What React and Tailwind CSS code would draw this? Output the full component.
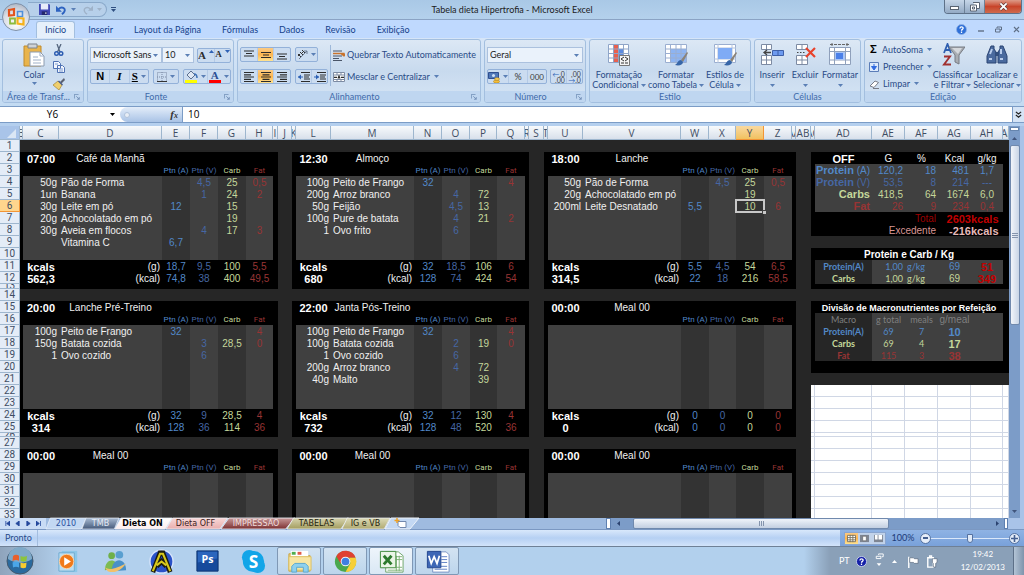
import clsx from "clsx";

const COLUMNS = [
  ["B", 3], ["C", 36], ["D", 103], ["E", 28], ["F", 28], ["G", 28], ["H", 27],
  ["I", 5], ["J", 14], ["K", 4], ["L", 35], ["M", 83], ["N", 28], ["O", 28],
  ["P", 27], ["Q", 28], ["R", 4], ["S", 15], ["T", 4], ["U", 35], ["V", 98],
  ["W", 28], ["X", 27], ["Y", 28], ["Z", 28], ["AA", 4], ["AB", 15], ["AC", 4],
  ["AD", 57], ["AE", 33], ["AF", 33], ["AG", 33], ["AH", 32], ["AI", 6],
];
const NAMES = COLUMNS.map((c) => c[0]);
const ROWS = Array.from({ length: 33 }, (_, i) => i + 1);

const WHITE = "text-[#f0f0f0]";
const BOLD = "font-bold text-[11px]";
const PTN_A = "text-[#5288c8]";
const PTN_V = "text-[#4667a4]";
const CARB = "text-[#c4d79b]";
const FAT = "text-[#983434]";
const MACROS = [PTN_A, PTN_V, CARB, FAT];

const MEALS = [
  {
    col: "C", row: 2, time: "07:00", name: "Café da Manhã",
    items: [
      ["50g", "Pão de Forma", "", "4,5", "25", "0,5"],
      ["1un", "Banana", "", "1", "24", "2"],
      ["30g", "Leite em pó", "12", "", "15", ""],
      ["20g", "Achocolatado em pó", "", "", "19", ""],
      ["30g", "Aveia em flocos", "", "4", "17", "3"],
      ["", "Vitamina C", "6,7", "", "", ""],
    ],
    total: "562,3", g: ["18,7", "9,5", "100", "5,5"], kcal: ["74,8", "38", "400", "49,5"],
  },
  {
    col: "L", row: 2, time: "12:30", name: "Almoço",
    items: [
      ["100g", "Peito de Frango", "32", "", "", "4"],
      ["200g", "Arroz branco", "", "4", "72", ""],
      ["50g", "Feijão", "", "4,5", "13", ""],
      ["100g", "Pure de batata", "", "4", "21", "2"],
      ["1", "Ovo frito", "", "6", "", ""],
    ],
    total: "680", g: ["32", "18,5", "106", "6"], kcal: ["128", "74", "424", "54"],
  },
  {
    col: "U", row: 2, time: "18:00", name: "Lanche",
    items: [
      ["50g", "Pão de Forma", "", "4,5", "25", "0,5"],
      ["20g", "Achocolatado em pó", "", "", "19", ""],
      ["200ml", "Leite Desnatado", "5,5", "", "10", "6"],
    ],
    total: "314,5", g: ["5,5", "4,5", "54", "6,5"], kcal: ["22", "18", "216", "58,5"],
  },
  {
    col: "C", row: 15, time: "20:00", name: "Lanche Pré-Treino",
    items: [
      ["100g", "Peito de Frango", "32", "", "", "4"],
      ["150g", "Batata cozida", "", "3", "28,5", "0"],
      ["1", "Ovo cozido", "", "6", "", ""],
    ],
    total: "314", g: ["32", "9", "28,5", "4"], kcal: ["128", "36", "114", "36"],
  },
  {
    col: "L", row: 15, time: "22:00", name: "Janta Pós-Treino",
    items: [
      ["100g", "Peito de Frango", "32", "", "", "4"],
      ["100g", "Batata cozida", "", "2", "19", "0"],
      ["1", "Ovo cozido", "", "6", "", ""],
      ["200g", "Arroz branco", "", "4", "72", ""],
      ["40g", "Malto", "", "", "39", ""],
    ],
    total: "732", g: ["32", "12", "130", "4"], kcal: ["128", "48", "520", "36"],
  },
  {
    col: "U", row: 15, time: "00:00", name: "Meal 00", items: [],
    total: "0", g: ["0", "0", "0", "0"], kcal: ["0", "0", "0", "0"],
  },
  { col: "C", row: 28, time: "00:00", name: "Meal 00", items: [] },
  { col: "L", row: 28, time: "00:00", name: "Meal 00", items: [] },
  { col: "U", row: 28, time: "00:00", name: "Meal 00", items: [] },
];

const cells = {};
const put = (col, row, text, cls, span = 1) => {
  if (text) cells[col + row] = { text, cls, span };
};

MEALS.forEach((m) => {
  const start = NAMES.indexOf(m.col);
  const col = (i) => NAMES[start + i];
  const bold = clsx("text-center text-white", BOLD);
  put(col(0), m.row, m.time, bold);
  put(col(1), m.row, m.name, clsx("text-center", WHITE));
  ["Ptn (A)", "Ptn (V)", "Carb", "Fat"].forEach((h, i) =>
    put(col(i + 2), m.row + 1, h, clsx("text-center text-[8px] font-['Roboto',sans-serif]", MACROS[i]))
  );
  m.items.forEach((item, r) => {
    const row = m.row + 2 + r;
    put(col(0), row, item[0], clsx("text-right pr-[2px]", WHITE));
    put(col(1), row, item[1], clsx("text-left pl-[2px]", WHITE));
    MACROS.forEach((c, i) => put(col(i + 2), row, item[i + 2], clsx("text-center", c)));
  });
  if (!m.total) return;
  put(col(0), m.row + 9, "kcals", bold);
  put(col(0), m.row + 10, m.total, bold);
  put(col(1), m.row + 9, "(g)", clsx("text-right pr-[2px]", WHITE));
  put(col(1), m.row + 10, "(kcal)", clsx("text-right pr-[2px]", WHITE));
  MACROS.forEach((c, i) => {
    put(col(i + 2), m.row + 9, m.g[i], clsx("text-center", c));
    put(col(i + 2), m.row + 10, m.kcal[i], clsx("text-center", c));
  });
});

// Daily summary
put("AD", 2, "OFF", clsx("text-center text-white", BOLD));
["G", "%", "Kcal", "g/kg"].forEach((h, i) =>
  put(["AE", "AF", "AG", "AH"][i], 2, h, clsx("text-center", WHITE))
);
[
  [<><b className="text-[11px]">Protein</b> (A)</>, "120,2", "18", "481", "1,7"],
  [<><b className="text-[11px]">Protein</b> (V)</>, "53,5", "8", "214", "---"],
  [<b className="text-[11px]">Carbs</b>, "418,5", "64", "1674", "6,0"],
  [<b className="text-[11px]">Fat</b>, "26", "9", "234", "0,4"],
].forEach((line, r) => {
  line.forEach((v, i) =>
    put(
      ["AD", "AE", "AF", "AG", "AH"][i],
      r + 3,
      v,
      clsx(i === 4 ? "text-center" : "text-right pr-[2px]", MACROS[r])
    )
  );
});
put("AE", 7, "Total", "text-right pr-[2px] text-[#9c0000]", 2);
put("AG", 7, "2603", clsx("text-right text-[#c00000]", BOLD));
put("AH", 7, "kcals", clsx("text-left text-[#c00000]", BOLD));
put("AE", 8, "Excedente", "text-right pr-[2px] text-[#d99694]", 2);
put("AG", 8, "-216", clsx("text-right text-[#e6b9b8]", BOLD));
put("AH", 8, "kcals", clsx("text-left text-[#e6b9b8]", BOLD));

const SMALL = "text-[9px] font-['Lato',sans-serif]";
put("AD", 10, "Protein e Carb / Kg", "text-center font-bold text-white text-[10px]", 5);
[["Protein(A)", PTN_A, "51"], ["Carbs", CARB, "349"]].forEach(([label, c, kcal], i) => {
  put("AD", 11 + i, label, clsx(SMALL, "text-center font-bold", c));
  put("AE", 11 + i, "1,00", clsx(SMALL, "text-right pr-[2px]", c));
  put("AF", 11 + i, "g/kg", clsx(SMALL, "text-left pl-[2px]", c));
  put("AG", 11 + i, "69", clsx("text-center text-[10px]", c));
  put("AH", 11 + i, kcal, clsx("text-center text-[#c00000]", BOLD));
});

put("AD", 15, "Divisão de Macronutrientes por Refeição", "text-center font-bold text-white text-[9px]", 5);
["Macro", "g total", "meals", "g/meal"].forEach((h, i) =>
  put(["AD", "AE", "AF", "AG"][i], 16, h, clsx(i < 3 ? SMALL : "text-[10px]", "text-center text-[#7f7f7f]"))
);
[
  ["Protein(A)", "69", "7", "10", PTN_A],
  ["Carbs", "69", "4", "17", CARB],
  ["Fat", "115", "3", "38", FAT],
].forEach(([label, g, meals, per, c], i) => {
  put("AD", 17 + i, label, clsx(SMALL, "text-center font-bold", c));
  put("AE", 17 + i, g, clsx(SMALL, "text-center", c));
  put("AF", 17 + i, meals, clsx(SMALL, "text-center", c));
  put("AG", 17 + i, per, clsx("text-center", BOLD, c));
});

const DARK = "bg-[#262626]";

function cellBackground(col, row) {
  const c = NAMES.indexOf(col);
  if (c >= NAMES.indexOf("AC")) {
    if (row >= 22) return "bg-white border-r border-b border-[#d0d7e5]";
    if (row === 1 || row === 9 || row === 14 || row === 21) return DARK;
    if (col === "AC" || col === "AI") return "bg-black";
    if (row >= 3 && row <= 6) return "bg-[#404040]";
    if (row === 11 || row === 12 || (row >= 16 && row <= 19))
      return col === "AD" ? DARK : "bg-[#404040]";
    return "bg-black";
  }
  if (row === 1 || row === 14 || row === 27) return DARK;
  if (["J", "S", "AB"].includes(col)) return DARK;
  if (["B", "I", "K", "R", "T", "AA"].includes(col)) return "bg-black";
  const offset = row < 14 ? row - 2 : row < 27 ? row - 15 : row - 28;
  if (offset < 2 || (offset > 8 && row < 27)) return "bg-black";
  return ["E", "G", "N", "P", "W", "Y"].includes(col) ? "bg-[#333333]" : "bg-[#404040]";
}

function rowHeight(row) {
  if (row === 13) return "h-[5px]";
  if (row === 26) return "h-1";
  return "h-3";
}

function SheetRow({ row }) {
  const out = [];
  for (let i = 0; i < NAMES.length; i++) {
    const col = NAMES[i];
    const cell = cells[col + row];
    const active = col === "Y" && row === 6;
    out.push(
      <td
        key={col}
        colSpan={cell?.span}
        className={clsx(
          "p-0 whitespace-nowrap leading-3 align-middle",
          cellBackground(col, row),
          cell?.cls
        )}
      >
        {cell && (
          <div className={clsx("flex h-3 items-center pt-px", active && "relative", {
            "justify-center": cell.cls.includes("text-center"),
            "justify-end": cell.cls.includes("text-right"),
          })}>
            <span>{cell.text}</span>
            {active && (
              <span className="absolute -inset-[1px] border-2 border-[#c8c8c8]">
                <i className="absolute -right-[3px] -bottom-[3px] size-1 border-t border-l border-[#404040] bg-[#c8c8c8]" />
              </span>
            )}
          </div>
        )}
      </td>
    );
    if (cell && cell.span > 1) i += cell.span - 1;
  }
  return (
    <tr className={rowHeight(row)}>
      <th
        scope="row"
        className={clsx(
          "border-r border-b p-0 text-center font-['Roboto',sans-serif] font-normal text-[#3f4d63]",
          row === 6 ? "border-[#f29536] bg-[#ffd58d]" : "border-[#9eb6ce] bg-[#e4ecf7]"
        )}
      >
        <div
          className={clsx("overflow-hidden", {
            "h-1 leading-1": row === 13,
            "h-[3px] leading-[3px]": row === 26,
            "h-[11px] leading-[12px]": row !== 13 && row !== 26,
          })}
        >
          {row}
        </div>
      </th>
      {out}
    </tr>
  );
}

function Sheet() {
  return (
    <table className="w-[1009px] table-fixed border-separate border-spacing-0 font-['Liberation_Sans',sans-serif] text-[10px]">
      <colgroup>
        <col className="w-[20px]" />
        {COLUMNS.map(([name, width]) => (
          <col key={name} style={{ width }} />
        ))}
      </colgroup>
      <thead className="font-['Open_Sans',sans-serif]">
        <tr className="h-[14px]">
          <th className="border-r border-b border-[#9eb6ce] bg-[#a9c4e9] p-0">
            <svg viewBox="0 0 18 12" className="ml-auto h-3 w-[18px]">
              <path d="M15 2v9H6z" fill="#dbe7f5" />
            </svg>
          </th>
          {NAMES.map((name) => (
            <th
              key={name}
              scope="col"
              className={clsx(
                "border-r border-b bg-linear-to-b p-0 font-normal text-[#3f4d63]",
                name === "Y"
                  ? "border-[#f29536] from-[#f9d99f] to-[#f1c15f]"
                  : "border-[#9eb6ce] from-[#f8fafc] to-[#d8e0eb]"
              )}
            >
              <div className="flex h-[13px] items-center justify-center overflow-hidden leading-3">{name}</div>
            </th>
          ))}
        </tr>
      </thead>
      <tbody>
        {ROWS.map((row) => (
          <SheetRow key={row} row={row} />
        ))}
      </tbody>
    </table>
  );
}

/* ---------- shared bits ---------- */

function Caret({ className = "text-[#5a7fb5]" }) {
  return (
    <svg viewBox="0 0 5 3" className={clsx("h-[3px] w-[5px] shrink-0", className)}>
      <path d="M0 0h5L2.500 3z" fill="currentColor" />
    </svg>
  );
}

function Icon({ box = 16, className = "size-4", children }) {
  return (
    <svg viewBox={`0 0 ${box} ${box}`} className={clsx("shrink-0", className)} fill="none">
      {children}
    </svg>
  );
}

function Group({ title, launcher, className, children }) {
  return (
    <section
      className={clsx(
        "flex flex-col overflow-hidden rounded-[3px] border border-[#a3bfdf] bg-linear-to-b from-[#dce8f5] via-[#c8daee] to-[#d6e5f5]",
        className
      )}
    >
      <div className="flex min-h-0 flex-1">{children}</div>
      <div className="flex h-[11px] items-center bg-[#bfd6f0] text-[#3e6aaa]">
        <h2 className="flex-1 truncate text-center leading-[11px]">{title}</h2>
        {launcher && (
          <button aria-label={`${title} opções`} className="pr-[3px]">
            <Icon box={8} className="size-[6px]">
              <path d="M.5 6V.5H6M3 3l4 4M7 4v3H4" stroke="#6684ad" />
            </Icon>
          </button>
        )}
      </div>
    </section>
  );
}

function BtnBox({ className, children }) {
  return (
    <div className={clsx("flex h-[15px] divide-x divide-[#b4cae6] overflow-hidden rounded-[2px] border border-[#93b1d9] bg-[#cbdcf0]", className)}>
      {children}
    </div>
  );
}

function Tool({ label, on, className, children }) {
  return (
    <button
      aria-label={label}
      className={clsx(
        "flex flex-1 items-center justify-center gap-[3px]",
        on && "bg-linear-to-b from-[#fbcb84] via-[#fdb64f] to-[#fee391]",
        className
      )}
    >
      {children}
    </button>
  );
}

function Combo({ label, value, className }) {
  return (
    <label className={clsx("relative flex items-center", className)}>
      <select
        aria-label={label}
        defaultValue={value}
        className="h-4 w-full appearance-none border border-[#abc1de] bg-[#eaf2fb] pl-[2px] leading-3 text-[#1b1b1b]"
      >
        <option>{value}</option>
      </select>
      <Caret className="pointer-events-none absolute right-1 text-[#5a7fb5]" />
    </label>
  );
}

function BigButton({ lines, icon, className }) {
  const [first, second] = lines;
  return (
    <button className={clsx("flex flex-col items-center pt-[3px] leading-[10px] whitespace-nowrap", className)}>
      {icon}
      <span className="mt-[3px]">{first}</span>
      <span className="flex h-[10px] items-center gap-[2px]">
        {second}
        <Caret />
      </span>
    </button>
  );
}

function AlignIcon({ lines }) {
  return (
    <Icon box={12} className="size-3">
      {lines.map(([x, y, w]) => (
        <path key={y} d={`M${x} ${y}h${w}`} stroke="#2c2c2c" strokeWidth="1.2" />
      ))}
    </Icon>
  );
}

const brush = (
  <>
    <path d="M23 9l-6 8 2 2 5-9z" fill="#8b8378" />
    <path d="M17 17c-3 0-3 3-6 5 4 1 8 0 8-3z" fill="#3766a8" />
  </>
);

/* ---------- window chrome ---------- */

function TitleBar() {
  return (
    <header className="flex h-[19px] items-stretch bg-linear-to-b from-[#a9c8e6] to-[#b4d1ec] pl-[28px]">
      <div className="my-[2px] flex w-[79px] items-center rounded-r-full border border-l-0 border-[#8aa9ca] bg-[#b7d0ea] pl-[11px]">
        <button aria-label="Salvar">
          <Icon box={12} className="size-[11px]">
            <path d="M0 0h11l1 1v11H0z" fill="#4148b5" />
            <path d="M2 0h8v6H2z" fill="#e8ecfa" />
            <path d="M3 8h6v4H3z" fill="#23286e" />
            <path d="M7 9h1v2H7z" fill="#fff" />
          </Icon>
        </button>
        <button aria-label="Desfazer" className="ml-[6px] flex items-center gap-[5px]">
          <Icon box={12} className="size-[10px]">
            <path d="M3 5c4-4 9-1 7 3-.6 1.400-1.500 2.200-3 3" stroke="#2d62c0" strokeWidth="2.200" />
            <path d="M0 1v7h7z" fill="#2d62c0" />
          </Icon>
          <Caret />
        </button>
        <button aria-label="Refazer" className="ml-[7px] flex items-center gap-[4px]">
          <Icon box={12} className="size-[10px]">
            <path d="M9 5C5 1 0 4 2 8c.6 1.400 1.500 2.200 3 3" stroke="#9fb2c8" strokeWidth="1.600" />
            <path d="M12 1v6H6z" fill="#9fb2c8" />
          </Icon>
          <Caret className="text-[#9fb2c8]" />
        </button>
      </div>
      <button aria-label="Personalizar" className="ml-1 flex flex-col items-center justify-center gap-px">
        <span className="h-px w-[5px] bg-[#2f4f80]" />
        <Caret className="text-[#2f4f80]" />
      </button>
      <h1 className="flex-1 pt-[1px] pr-9 text-center text-[9px] leading-[18px] text-[#1c1c1c]">
        Tabela dieta Hipertrofia - Microsoft Excel
      </h1>
      <div className="mr-[2px] flex h-[14px] w-[78px] overflow-hidden rounded-b-[4px] border border-t-0 border-[#5d7188]">
        <button aria-label="Minimizar" className="flex flex-1 items-end justify-center border-r border-[#6c8197] bg-linear-to-b from-[#c6d6e8] to-[#93aac4] pb-[3px]">
          <span className="h-[4px] w-[9px] border border-[#5a6472] bg-white" />
        </button>
        <button aria-label="Restaurar" className="flex flex-1 items-center justify-center border-r border-[#6c8197] bg-linear-to-b from-[#c6d6e8] to-[#93aac4]">
          <Icon box={10} className="size-[10px]">
            <path d="M3 .5h6.500v6H7" fill="#fff" stroke="#5a6472" />
            <path d="M.5 3h6v6h-6z" fill="#fff" stroke="#5a6472" />
            <path d="M2.500 5h2v2h-2z" stroke="#5a6472" />
          </Icon>
        </button>
        <button aria-label="Fechar" className="flex w-[36px] items-center justify-center bg-linear-to-b from-[#dc9a88] via-[#c8442a] to-[#cf6a4c]">
          <Icon box={10} className="size-[9px]">
            <path d="M1.500 1.500l7 7M8.500 1.500l-7 7" stroke="#5c4040" strokeWidth="3.400" />
            <path d="M1.500 1.500l7 7M8.500 1.500l-7 7" stroke="#fff" strokeWidth="2" />
          </Icon>
        </button>
      </div>
    </header>
  );
}

function OfficeButton() {
  return (
    <button aria-label="Botão Office" className="absolute top-[3px] left-[2px] size-[28px]">
      <svg viewBox="0 0 28 28" className="size-full" fill="none">
        <defs>
          <radialGradient id="orb" cx=".5" cy=".75" r=".8">
            <stop offset="0" stopColor="#fdfdfd" />
            <stop offset=".6" stopColor="#d9dde6" />
            <stop offset="1" stopColor="#a8b0be" />
          </radialGradient>
        </defs>
        <circle cx="14" cy="14" r="13.500" fill="url(#orb)" stroke="#7e90a8" />
        <g strokeWidth="2.200">
          <path d="M7 7l5-1v6l-5 .5z" stroke="#e2531c" />
          <path d="M15.500 8.500h5v5h-5z" stroke="#4f8fd9" strokeWidth="1.600" />
          <path d="M8 15.500h5v5H8z" stroke="#8dba3c" strokeWidth="1.800" />
          <path d="M15.500 15l6 .5v6l-6-1z" stroke="#f6b21b" />
        </g>
      </svg>
    </button>
  );
}

function RibbonTabs() {
  const tabs = ["Início", "Inserir", "Layout da Página", "Fórmulas", "Dados", "Revisão", "Exibição"];
  return (
    <nav className="flex h-[19px] items-end border-t border-[#8aa3c4] bg-[#bfd9fe] pl-[36px] text-[#15428b]">
      <div className="flex flex-1 gap-[5px]">
        {tabs.map((tab, i) => (
          <button
            key={tab}
            className={clsx("h-[17px] px-2", i === 0 && "rounded-t-[3px] border border-b-0 border-[#a3bfdf] bg-[#e6f0fb]")}
          >
            {tab}
          </button>
        ))}
      </div>
      <div className="flex h-full items-center gap-[11px] pr-1 text-[#5f6f86]">
        <button aria-label="Ajuda">
          <Icon box={12} className="size-[11px]">
            <circle cx="6" cy="6" r="5.500" fill="#2e6fd8" stroke="#8fb2e6" />
            <path d="M4.300 4.800C4.300 2.700 7.900 2.700 7.800 4.700 7.700 6 6 5.800 6 7.300M6 8.300v1.400" stroke="#fff" strokeWidth="1.400" />
          </Icon>
        </button>
        <button aria-label="Minimizar pasta"><Icon box={6} className="size-[6px]"><path d="M0 5h6" stroke="currentColor" strokeWidth="1.400" /></Icon></button>
        <button aria-label="Restaurar pasta"><Icon box={7} className="size-[7px]"><path d="M2 2V1h4.500v3H5M.5 3h4.500v3H.5z" stroke="currentColor" /></Icon></button>
        <button aria-label="Fechar pasta"><Icon box={7} className="size-[7px]"><path d="M1 1l5 5M6 1L1 6" stroke="currentColor" strokeWidth="1.200" /></Icon></button>
      </div>
    </nav>
  );
}

function Ribbon() {
  return (
    <div className="flex h-[68px] gap-[3px] bg-linear-to-b from-[#d6e5f7] to-[#c3dbf2] px-[2px] pt-[1px] pb-[3px] text-[#294b87]">
      <Group title="Área de Transf..." launcher className="w-[82px]">
        <button className="flex w-[62px] flex-col items-center pt-[3px] leading-[10px]">
          <Icon box={24} className="size-6">
            <path d="M2 3h17v20H2z" fill="#e9b44c" stroke="#c08a2a" />
            <path d="M6 1h9v4H6z" fill="#cfd3d8" stroke="#7d838c" />
            <path d="M8 9h10l4 4v10H8z" fill="#fff" stroke="#8c9bb0" />
            <path d="M18 9v4h4M11 14h5M11 17h8M11 20h8" stroke="#9fb0c8" />
          </Icon>
          <span className="mt-[3px]">Colar</span>
          <Caret className="mt-[2px] text-[#5a7fb5]" />
        </button>
        <div className="-ml-[12px] flex flex-col items-start gap-[5px] pt-[4px]">
          <button aria-label="Recortar">
            <Icon box={12} className="size-3">
              <path d="M4 0l3 8M8 0L4.500 8" stroke="#56677f" strokeWidth="1.300" />
              <circle cx="3.500" cy="9.500" r="1.800" stroke="#2b5bb0" strokeWidth="1.400" />
              <circle cx="8" cy="9.500" r="1.800" stroke="#2b5bb0" strokeWidth="1.400" />
            </Icon>
          </button>
          <button aria-label="Copiar">
            <Icon box={12} className="size-3">
              <path d="M.5.5h5l2 2v5h-7zM4.500 4.500h5l2 2v5h-7z" fill="#f2f6fd" stroke="#4f72b4" />
              <path d="M6 8h4M6 10h4M2 3h3" stroke="#7d9bd0" />
            </Icon>
          </button>
          <button aria-label="Pincel">
            <Icon box={12} className="size-3">
              <path d="M11 0L7 4l1.500 1.500L12 2z" fill="#5b6170" />
              <path d="M5 3l4 4-3 5-6-5z" fill="#efcf6d" stroke="#a58432" strokeWidth=".7" />
              <path d="M5.500 3l4 4" stroke="#4b5d8a" strokeWidth="1.500" />
            </Icon>
          </button>
        </div>
      </Group>

      <Group title="Fonte" launcher className="w-[147px]">
        <div className="flex flex-1 flex-col gap-[6px] px-[2px] pt-[7px]">
          <div className="flex items-center">
            <Combo label="Fonte" value="Microsoft Sans" className="w-[72px]" />
            <Combo label="Tamanho" value="10" className="w-[32px]" />
            <BtnBox className="ml-auto w-[34px] font-['Liberation_Serif',serif] font-bold text-[#2c2c2c]">
              <Tool label="Aumentar fonte" className="gap-0 text-[11px]">A<Caret className="mb-2 rotate-180 text-[#2f62b5]" /></Tool>
              <Tool label="Diminuir fonte" className="gap-0 text-[9px]">A<Caret className="mb-2 text-[#2f62b5]" /></Tool>
            </BtnBox>
          </div>
          <div className="flex gap-1 font-['Liberation_Serif',serif] text-[11px] text-black">
            <BtnBox className="w-[59px] shrink-0">
              <Tool label="Negrito" className="font-['Liberation_Sans',sans-serif] font-bold">N</Tool>
              <Tool label="Itálico" className="font-bold italic">I</Tool>
              <Tool label="Sublinhado" className="font-bold"><span className="underline">S</span><Caret /></Tool>
            </BtnBox>
            <BtnBox className="w-[26px] shrink-0">
              <Tool label="Bordas">
                <Icon box={10} className="size-[10px]">
                  <path d="M.5.5h9v9h-9zM5 0v10M0 5h10" stroke="#7a8aa5" strokeDasharray="1 1" />
                  <path d="M0 9.500h10" stroke="#333" />
                </Icon>
                <Caret />
              </Tool>
            </BtnBox>
            <BtnBox className="flex-1">
              <Tool label="Cor de preenchimento">
                <Icon box={13} className="size-[13px]">
                  <path d="M2 5l4-4 4 4-4 4z" fill="#dfe8f3" stroke="#5b6f8f" />
                  <path d="M9 4c3 0 3 2 3 4" stroke="#3b6fb5" strokeWidth="1.500" />
                  <path d="M0 10h12v3H0z" fill="#ffff00" />
                </Icon>
                <Caret />
              </Tool>
              <Tool label="Cor da fonte">
                <span className="flex flex-col items-center text-[11px] leading-[9px] font-bold text-[#2c4f94]">
                  A
                  <span className="h-[3px] w-3 bg-[#ff0000]" />
                </span>
                <Caret />
              </Tool>
            </BtnBox>
          </div>
        </div>
      </Group>

      <Group title="Alinhamento" launcher className="w-[244px]">
        <div className="flex flex-col gap-[7px] pt-[7px] pl-[2px]">
          <div className="flex gap-1">
            <BtnBox className="w-[51px]">
              <Tool label="Alinhar acima"><AlignIcon lines={[[1, 2, 10], [3, 4.5, 6], [1, 7, 10]]} /></Tool>
              <Tool label="Alinhar no meio" on><AlignIcon lines={[[1, 3.500, 10], [3, 6, 6], [1, 8.500, 10]]} /></Tool>
              <Tool label="Alinhar abaixo"><AlignIcon lines={[[1, 5, 10], [3, 7.500, 6], [1, 10, 10]]} /></Tool>
            </BtnBox>
            <BtnBox className="w-[23px]">
              <Tool label="Orientação">
                <Icon box={11} className="size-[11px]">
                  <path d="M2 10L10 2M10 5V2H7" stroke="#6b7a92" />
                  <path d="M1 5l3 3M3 3l3 3M5 1l3 3M1 7l2-2M4 5l2-2" stroke="#333" />
                </Icon>
                <Caret />
              </Tool>
            </BtnBox>
          </div>
          <div className="flex gap-1">
            <BtnBox className="w-[51px]">
              <Tool label="Esquerda"><AlignIcon lines={[[1, 1.500, 10], [1, 3.800, 7], [1, 6, 10], [1, 8.300, 7], [1, 10.500, 10]]} /></Tool>
              <Tool label="Centro" on><AlignIcon lines={[[1, 1.500, 10], [2.500, 3.800, 7], [1, 6, 10], [2.500, 8.300, 7], [1, 10.500, 10]]} /></Tool>
              <Tool label="Direita"><AlignIcon lines={[[1, 1.500, 10], [4, 3.800, 7], [1, 6, 10], [4, 8.300, 7], [1, 10.500, 10]]} /></Tool>
            </BtnBox>
            <BtnBox className="w-[33px]">
              {["Diminuir recuo", "Aumentar recuo"].map((label, i) => (
                <Tool key={label} label={label}>
                  <Icon box={12} className="size-3">
                    <path d="M3 1.500h9M6 4h6M6 6h5M6 8h6M3 10.500h9" stroke="#2c2c2c" strokeWidth="1.200" />
                    <path d={i ? "M5 6L2 3.500v5z" : "M0 6l3-2.500v5z"} fill="#2f62b5" />
                    <path d="M0 6h5" stroke="#2f62b5" />
                  </Icon>
                </Tool>
              ))}
            </BtnBox>
          </div>
        </div>
        <div className="my-[5px] ml-[2px] w-px bg-[#9db8d9]" />
        <div className="flex flex-col gap-[7px] pt-[7px] pl-[2px]">
          <button className="flex h-[15px] items-center gap-[2px] whitespace-nowrap">
            <Icon box={12} className="size-3">
              <path d="M0 2h9M0 7h9M0 9.500h6M0 11.500h9" stroke="#4a5568" />
              <path d="M0 4.500h11v3M11 7L9 5.500h4z" stroke="#c9732c" strokeWidth="1.300" />
            </Icon>
            Quebrar Texto Automaticamente
          </button>
          <button className="flex h-[15px] items-center gap-[2px] whitespace-nowrap">
            <Icon box={12} className="size-3">
              <path d="M.5 1.500h11v9H.5zM0 4h12M0 8.500h12M4 1v3M8 1v3M4 9v2M8 9v2" fill="#fff" stroke="#7d8ba3" />
              <path d="M1 6.300h3M8 6.300h3M5 7.500l1-2.500 1 2.500" stroke="#2c2c2c" strokeWidth="1.200" />
            </Icon>
            Mesclar e Centralizar
            <Caret className="ml-[2px] text-[#5a7fb5]" />
          </button>
        </div>
      </Group>

      <Group title="Número" launcher className="w-[102px]">
        <div className="flex flex-1 flex-col gap-[6px] px-[2px] pt-[7px]">
          <Combo label="Formato de número" value="Geral" />
          <div className="flex justify-between text-[#3c3c3c]">
            <BtnBox className="w-[60px]">
              <Tool label="Contabilização">
                <Icon box={12} className="size-3">
                  <path d="M.5 1.500h10v6H.5z" fill="#4f77b8" stroke="#2f4f8f" />
                  <circle cx="5.500" cy="4.500" r="1.500" fill="#cfe0f5" />
                  <ellipse cx="8.500" cy="10.500" rx="3" ry="1.500" fill="#f4bf3a" stroke="#b98314" strokeWidth=".6" />
                  <ellipse cx="9" cy="8" rx="2.500" ry="1.300" fill="#f9d567" stroke="#b98314" strokeWidth=".6" />
                </Icon>
                <Caret />
              </Tool>
              <Tool label="Porcentagem">%</Tool>
              <Tool label="Milhares" className="text-[8px]">000</Tool>
            </BtnBox>
            <BtnBox className="w-[33px] text-[7px] leading-[6px]">
              <Tool label="Aumentar casas decimais"><span className="text-right"><span className="text-[#2f62b5]">←</span>,0<br />,00</span></Tool>
              <Tool label="Diminuir casas decimais"><span className="text-right">,00<br /><span className="text-[#2f62b5]">→</span>,0</span></Tool>
            </BtnBox>
          </div>
        </div>
      </Group>

      <Group title="Estilo" className="w-[162px]">
        <BigButton
          className="w-[58px]"
          lines={["Formatação", "Condicional"]}
          icon={
            <Icon box={24} className="size-6">
              <path d="M1.500 1.500h20v18h-20z" fill="#fff" />
              <path d="M6.500 1.500h5v18h-5z" fill="#e8604f" />
              <path d="M11 6h6v8h-6z" fill="#5d8be0" />
              <path d="M1.500 1.500h20v18h-20zM6.500 1.500v18M11.500 1.500v18M16.500 1.500v18M1 6h20M1 10.500h20M1 15h20" stroke="#8fa5c8" />
              <path d="M12.500 12.500h10v10h-10z" fill="#f4f4f4" stroke="#777" />
              <path d="M17 14l-3 2 3 2M14 20h3M18 14l3 2-3 2M18 20h3" stroke="#333" />
            </Icon>
          }
        />
        <BigButton
          className="w-[56px]"
          lines={["Formatar", "como Tabela"]}
          icon={
            <Icon box={24} className="size-6">
              <path d="M1.500 1.500h21v18h-21z" fill="#fff" />
              <path d="M6.500 6h16v13.500h-16z" fill="#8db4f2" />
              <path d="M1.500 1.500h21v18h-21zM6.500 1.500v18M12 1.500v18M17 1.500v18M1 6h21M1 10.500h21M1 15h21" stroke="#9aaed0" />
              {brush}
            </Icon>
          }
        />
        <BigButton
          className="w-[42px]"
          lines={["Estilos de", "Célula"]}
          icon={
            <Icon box={24} className="size-6">
              <path d="M1.500 1.500h21v18h-21z" fill="#fff" stroke="#9aaed0" />
              <path d="M1 5h22M1 16h22M5 1v19M19 1v19" stroke="#b4c3dc" />
              <path d="M5 5h14v11H5z" fill="#7fabf5" />
              {brush}
            </Icon>
          }
        />
      </Group>

      <Group title="Células" className="w-[107px]">
        <BigButton
          className="w-[34px]"
          lines={["Inserir"]}
          icon={
            <Icon box={24} className="size-6">
              <path d="M1.500 1.500h10v5h-10zM1.500 12.500h10v9h-10zM6.500 1.500v5M6.500 12.500v9M1.500 17h10" fill="#fff" stroke="#7d8ba3" />
              <path d="M12.500 7.500h11v5h-11zM18 7.500v5" fill="#6c9af0" stroke="#3d5fa8" />
              <path d="M4 9.500h7M7 7l-3 2.500L7 12" stroke="#444" strokeWidth="1.300" />
            </Icon>
          }
        />
        <BigButton
          className="w-[32px]"
          lines={["Excluir"]}
          icon={
            <Icon box={24} className="size-6">
              <path d="M3.500 1.500h11v5h-11zM3.500 12.500h11v9h-11zM9 1.500v5M9 12.500v9M3.500 17h11" fill="#fff" stroke="#7d8ba3" />
              <path d="M4 9.500h9" stroke="#444" strokeDasharray="1.500 1.500" />
              <path d="M13 5l9 9M22 5l-9 9" stroke="#e8432c" strokeWidth="2.200" />
            </Icon>
          }
        />
        <BigButton
          className="w-[38px]"
          lines={["Formatar"]}
          icon={
            <Icon box={24} className="size-6">
              <path d="M2 1.500h19M4 0v3M19 0v3" stroke="#666" strokeDasharray="3 1" />
              <path d="M1.500 4.500h21v17h-21zM6.500 4.500v17M17.500 4.500v17M1.500 8.500h21M1.500 17h21" fill="#fff" stroke="#8fa0bb" />
              <path d="M7 9h10v8H7z" fill="#a8c5f7" />
              <path d="M8 10h7v6H8z" fill="#4b80e8" />
            </Icon>
          }
        />
      </Group>

      <Group title="Edição" className="min-w-0 flex-1">
        <div className="flex w-[67px] flex-col gap-[2px] pt-[2px] pl-[4px]">
          <button className="flex h-[15px] items-center gap-[4px]">
            <span className="w-[10px] text-[11px] font-bold text-black">Σ</span>AutoSoma<Caret />
          </button>
          <button className="flex h-[15px] items-center gap-[4px]">
            <Icon box={10} className="size-[10px]">
              <path d="M.5.5h9v9h-9z" fill="#dce9fb" stroke="#5b7db8" />
              <path d="M5 2v3M2.500 4.500h5L5 8z" fill="#2f6ae0" stroke="#2f6ae0" />
            </Icon>
            Preencher<Caret />
          </button>
          <button className="flex h-[15px] items-center gap-[4px]">
            <Icon box={10} className="size-[10px]">
              <path d="M1 7l5-5 3.500 1.500-4.500 5z" fill="#fff" stroke="#777c88" />
              <path d="M4 9.500h6" stroke="#777c88" />
            </Icon>
            Limpar<Caret />
          </button>
        </div>
        <BigButton
          className="w-[46px]"
          lines={["Classificar", "e Filtrar"]}
          icon={
            <Icon box={24} className="size-6">
              <path d="M3 10L6.500 1 10 10M4.500 7h4" stroke="#2f5fb0" strokeWidth="1.800" />
              <path d="M3 13.500h6L3 21.500h7" stroke="#a03030" strokeWidth="1.900" />
              <path d="M8 4h16l-6 8v9l-4-2v-7z" fill="#a9adb3" stroke="#777b82" />
              <path d="M11 5h10l-4 6z" fill="#d5d8dc" />
            </Icon>
          }
        />
        <BigButton
          className="w-[48px]"
          lines={["Localizar e", "Selecionar"]}
          icon={
            <Icon box={24} className="size-6">
              <path d="M6 3h3v3l2 3v11H2v-7zM15 3h3l4 10v7h-9V9l2-3z" fill="#4a6a9e" stroke="#2b4473" />
              <path d="M10 9h4v4h-4z" fill="#33507f" />
              <path d="M4 16h3M15 16h3M7 6l-2 5M16 6v5" stroke="#b9cdec" strokeWidth="2" />
            </Icon>
          }
        />
      </Group>
    </div>
  );
}

function FormulaBar() {
  return (
    <div className="h-5 bg-[#b4cfee] pb-[3px]">
      <div className="flex h-[17px] items-stretch border-y border-[#7b9cc6] bg-white font-['Open_Sans',sans-serif] text-[10px]">
        <input
          aria-label="Caixa de nome"
          defaultValue="Y6"
          className="w-[105px] min-w-0 bg-white text-center text-black"
        />
        <button aria-label="Nomes" className="flex w-[15px] items-center justify-center">
          <Caret className="text-black" />
        </button>
        <div className="flex w-[63px] items-center justify-between rounded-l-full border-r border-[#7b9cc6] bg-linear-to-b from-[#e3edf9] to-[#a9c3e6] pr-[4px] pl-[4px]">
          <span className="size-[6px] rounded-full border border-[#b0c3dc] bg-[#e8eef6]" />
          <button aria-label="Inserir função" className="font-['Liberation_Serif',serif] text-[11px] font-bold text-[#333] italic">
            f<span className="text-[8px]">x</span>
          </button>
        </div>
        <input aria-label="Barra de fórmulas" defaultValue="10" className="min-w-0 flex-1 bg-white pl-[5px] text-black" />
        <button aria-label="Expandir" className="flex w-[12px] items-center justify-center border-l border-[#7b9cc6] bg-[#d5e4f6]">
          <Icon box={8} className="size-[7px]">
            <path d="M1 1l3 2.500L7 1M1 4.500L4 7l3-2.500" stroke="#222" strokeWidth="1.400" />
          </Icon>
        </button>
      </div>
    </div>
  );
}

function VerticalScroll() {
  return (
    <div className="flex w-[11px] shrink-0 flex-col items-center bg-[#7c9cc8]">
      <div className="mt-px h-1 w-[9px] border border-[#6685ae] bg-white" />
      <button aria-label="Rolar para cima" className="flex h-[14px] items-center">
        <Caret className="rotate-180 text-[#40557c]" />
      </button>
      <div className="flex h-[180px] w-[10px] flex-col items-center justify-center gap-px rounded-[2px] border border-[#7089ad] bg-linear-to-r from-[#f2f5fa] to-[#c9d5e6]">
        <i className="h-px w-[6px] bg-[#8494ad]" />
        <i className="h-px w-[6px] bg-[#8494ad]" />
        <i className="h-px w-[6px] bg-[#8494ad]" />
      </div>
      <button aria-label="Rolar para baixo" className="mt-auto flex h-[13px] items-center">
        <Caret className="text-[#40557c]" />
      </button>
    </div>
  );
}

const SHEET_TABS = [
  ["2010", "w-[36px]", "#c3d8f3", "#c3d8f3", "text-[#2a52a0]"],
  ["TMB", "w-[33px]", "#a9bbd3", "#44597a", "text-[#e5ebf5]"],
  ["Dieta ON", "w-[51px]", "#ffffff", "#fdeeee", "font-bold text-black"],
  ["Dieta OFF", "w-[55px]", "#f8d8d8", "#e9aeae", "text-[#3a2020]"],
  ["IMPRESSAO", "w-[66px]", "#c99a9a", "#7c2f30", "text-[#f1dede]"],
  ["TABELAS", "w-[55px]", "#d6d3ae", "#a39d5e", "text-[#25230f]"],
  ["IG e VB", "w-[43px]", "#dcdab8", "#b0aa70", "text-[#25230f]"],
];

function SheetTabs() {
  return (
    <div className="flex h-3 items-stretch border-b border-[#7b98c2] bg-[#9fbbe0] font-['DejaVu_Sans',sans-serif] text-[8px]">
      <div className="flex w-[46px] items-center justify-around bg-[#c9dcf5] px-[2px] text-[#23479b]">
        {["M1 0v6M6 0L2 3l4 3z", "M5 0L1 3l4 3z", "M1 0l4 3-4 3z", "M5.500 0v6M0 0l4 3-4 3z"].map((d) => (
          <button key={d} aria-label="Navegar planilhas">
            <svg viewBox="0 0 6 6" className="size-[5px]">
              <path d={d} fill="currentColor" stroke="currentColor" />
            </svg>
          </button>
        ))}
      </div>
      {SHEET_TABS.map(([name, width, top, bottom, text], i) => (
        <button key={name} className={clsx("relative flex shrink-0 justify-center leading-[11px]", width, text)}>
          <svg viewBox="0 0 100 11" preserveAspectRatio="none" className="absolute inset-0 h-full w-full overflow-visible">
            <defs>
              <linearGradient id={`tab${i}`} x2="0" y2="1">
                <stop offset="0" stopColor={top} />
                <stop offset="1" stopColor={bottom} />
              </linearGradient>
            </defs>
            <path d="M0 11L12 0H112L98 11z" fill={`url(#tab${i})`} stroke="#eef3fa" />
          </svg>
          <span className="relative whitespace-nowrap pl-1">{name}</span>
        </button>
      ))}
      <button aria-label="Inserir planilha" className="relative w-[28px] shrink-0">
        <svg viewBox="0 0 28 11" className="h-[11px] w-[28px] overflow-visible" fill="none">
          <path d="M0 11L6 0H34L25 11z" fill="#c3d8f3" stroke="#eef3fa" />
          <path d="M13 3.500h8v6h-6l-2-2z" fill="#fff" stroke="#7288ad" />
          <path d="M12 0v5M9.500 2.500h5" stroke="#f0a020" strokeWidth="1.400" />
        </svg>
      </button>
      <div className="flex-1" />
      <div className="flex w-[418px] items-center bg-[#7c9cc8]">
        <i className="h-full w-[5px] border border-[#5f80b0] bg-white" />
        <button aria-label="Rolar para a esquerda" className="flex w-[22px] items-center pl-[5px]">
          <Caret className="rotate-90 text-[#2c4370]" />
        </button>
        <div className="flex h-[11px] w-[256px] items-center justify-center gap-px rounded-[2px] border border-[#7089ad] bg-linear-to-b from-[#f0f4fa] to-[#c3cfe1]">
          <i className="h-[5px] w-px bg-[#8494ad]" />
          <i className="h-[5px] w-px bg-[#8494ad]" />
          <i className="h-[5px] w-px bg-[#8494ad]" />
        </div>
        <button aria-label="Rolar para a direita" className="ml-auto flex w-[14px] items-center justify-center">
          <Caret className="-rotate-90 text-[#2c4370]" />
        </button>
        <i className="h-full w-1 border border-[#5f80b0] bg-white" />
        <i className="h-full w-4 bg-[#a9c3e8]" />
      </div>
    </div>
  );
}

function StatusBar() {
  return (
    <footer className="flex h-4 items-stretch bg-linear-to-b from-[#d9e8fb] via-[#b6d0f3] to-[#d2e3fa] text-[#284a8a]">
      <span className="w-[38px] border-r border-[#a3bddf] pl-[5px] leading-4">Pronto</span>
      <div className="flex-1" />
      <div className="flex w-[184px] items-center bg-linear-to-b from-[#8fb3e4] to-[#79a1da] pl-[4px]">
        <div className="flex h-[13px] w-[42px] border border-[#8aa5cf] bg-[#c2d3ea]">
          <Tool label="Normal" on>
            <Icon box={10} className="size-[9px]"><path d="M.5 1.500h9v7h-9zM3.500 1v8M6.500 1v8M0 4h10M0 6.500h10" fill="#fff" stroke="#77705c" /></Icon>
          </Tool>
          <Tool label="Layout da página">
            <Icon box={10} className="size-[9px]"><path d="M0 1h10v8H0z" fill="#7e8592" /><path d="M3 2.500h4v5H3z" fill="#fff" stroke="#555" strokeWidth=".6" /></Icon>
          </Tool>
          <Tool label="Quebra de página">
            <Icon box={10} className="size-[9px]"><path d="M0 1h10v8H0z" fill="#7e8592" /><path d="M1 1h3v5H1zM5 1h4v5H5z" fill="#fff" /></Icon>
          </Tool>
        </div>
        <span className="w-[34px] text-center leading-4 text-[#1c3a78]">100%</span>
        <button aria-label="Reduzir" className="flex size-[11px] items-center justify-center rounded-full border border-[#5471a0] bg-[#e6eefa]">
          <i className="h-[2px] w-[5px] bg-[#445f90]" />
        </button>
        <input
          type="range"
          aria-label="Zoom"
          defaultValue={50}
          className="h-[11px] w-[78px] appearance-none bg-transparent [&::-webkit-slider-runnable-track]:h-px [&::-webkit-slider-runnable-track]:bg-[#dbe8fa] [&::-webkit-slider-thumb]:-mt-1 [&::-webkit-slider-thumb]:h-[9px] [&::-webkit-slider-thumb]:w-[6px] [&::-webkit-slider-thumb]:appearance-none [&::-webkit-slider-thumb]:rounded-b-full [&::-webkit-slider-thumb]:border [&::-webkit-slider-thumb]:border-[#5471a0] [&::-webkit-slider-thumb]:bg-[#dfe9f7]"
        />
        <button aria-label="Ampliar" className="flex size-[11px] items-center justify-center rounded-full border border-[#5471a0] bg-[#e6eefa]">
          <Icon box={7} className="size-[7px]"><path d="M3.500 0v7M0 3.500h7" stroke="#445f90" strokeWidth="1.600" /></Icon>
        </button>
      </div>
    </footer>
  );
}

const APPS = [
  ["Windows Media Player", false, (
    <>
      <path d="M6 3h16v22H6z" fill="#8cc7e8" />
      <path d="M3 5h16v19H3z" fill="#b9def2" stroke="#6fabd0" />
      <circle cx="11" cy="14" r="7.500" fill="#f07a1a" stroke="#fbd3a8" />
      <path d="M8.500 9.500v9l7-4.500z" fill="#fff" />
    </>
  )],
  ["Messenger", false, (
    <>
      <circle cx="10" cy="8" r="3.500" fill="#6fb04a" />
      <path d="M3 23c0-13 13-13 13-2z" fill="#7dbb52" />
      <circle cx="18" cy="7" r="4" fill="#5a9fd0" />
      <path d="M10 24c0-15 15-15 15-1z" fill="#4a90c8" />
      <path d="M2 19c5 6 14 1 23-3-5 7-12 11-19 8z" fill="#f2c06a" />
    </>
  )],
  ["aTube", false, (
    <>
      <circle cx="14" cy="14" r="12" fill="#2a52c8" stroke="#d6e4fa" strokeWidth="1.500" />
      <path d="M5 25l7.500-20h3L23 25M9 19l5-5 5 5" stroke="#1c1c10" strokeWidth="5" />
      <path d="M5 24l7.500-18h3L23 24M9 18l5-4 5 4" stroke="#d8c81c" strokeWidth="2.200" />
    </>
  )],
  ["Photoshop", false, (
    <>
      <path d="M3 3h22v21H3z" fill="#164a9c" stroke="#0d3370" />
      <path d="M4 4h20v7L4 15z" fill="#2b66bd" />
      <text x="14" y="16" textAnchor="middle" fontSize="11" fontWeight="bold" fontFamily="Open Sans, sans-serif" fill="#fff">Ps</text>
    </>
  )],
  ["Skype", false, (
    <>
      <circle cx="9.500" cy="9.500" r="7.500" fill="#12a5e8" />
      <circle cx="18.500" cy="18.500" r="7.500" fill="#12a5e8" />
      <circle cx="14" cy="14" r="11" fill="#12a5e8" />
      <text x="14" y="20.500" textAnchor="middle" fontSize="18" fontWeight="bold" fontFamily="Open Sans, sans-serif" fill="#fff">S</text>
    </>
  )],
  ["Explorer", true, (
    <>
      <path d="M3 6h8l2 2h12v16H3z" fill="#eccf74" stroke="#c9a545" />
      <path d="M5 3h18v6H5z" fill="#fff" />
      <path d="M6 4h4v3H6z" fill="#4fae4f" />
      <path d="M12 4h4v3h-4z" fill="#e05a4a" />
      <path d="M3 9h23v14H3z" fill="#f7e6a4" stroke="#dcbf62" />
      <path d="M6 25v-6l3-3h11l3 3v6h-5v-5h-7v5z" fill="#8fd0ee" stroke="#5ca9cf" />
    </>
  )],
  ["Chrome", true, (
    <>
      <circle cx="14" cy="14" r="11" fill="#4aa84e" />
      <path d="M4.500 8.500A11 11 0 0124.500 10H14l-5 6z" fill="#df4031" />
      <path d="M24.500 10A11 11 0 0114 25l5-9-1-6z" fill="#f7cf38" />
      <circle cx="14" cy="14" r="5" fill="#f4f4f4" />
      <circle cx="14" cy="14" r="4" fill="#3f7fe0" />
    </>
  )],
  ["Excel", true, (
    <>
      <path d="M8 4h13l5 4v17H8z" fill="#fff" stroke="#6fa66a" />
      <path d="M16 9h9M16 12h9M10 20h15M10 23h15M19 8v16M22 8v16" stroke="#7fb379" />
      <path d="M2.500 3.500h16v17h-16z" fill="#eaf5e6" stroke="#3f8a3c" />
      <path d="M6 8l8 9M14 8l-8 9" stroke="#2c7a2c" strokeWidth="3" />
    </>
  )],
  ["Word", true, (
    <>
      <path d="M9 4h14l3 3v18H9z" fill="#fff" stroke="#7a93c4" />
      <path d="M18 9h6M18 12h6M18 15h6M11 19h13M11 22h13" stroke="#5f80c4" />
      <path d="M3.500 3.500h14v17h-14z" fill="#3d66b5" stroke="#24478f" />
      <path d="M5 8l2.500 8L10.500 9l3 7L16 8" stroke="#fff" strokeWidth="1.800" />
    </>
  )],
];

function Taskbar() {
  return (
    <div className="flex h-[29px] items-stretch border-t border-[#6f8096] bg-[#b2d0ed]">
      <div className="flex flex-1 items-stretch bg-linear-to-r from-[#8fa4bc] via-[#b2d0ed] via-8% to-[#b2d0ed]">
        <button aria-label="Iniciar" className="flex w-[47px] items-center pl-[6px]">
          <Icon box={28} className="size-[28px]">
            <circle cx="14" cy="14" r="13" fill="#2a6a9e" stroke="#44586c" />
            <path d="M2 12a12 12 0 0124 0c-8 5-16 5-24 0z" fill="#7fa9c8" />
            <path d="M7 9c2-1.500 4-1.500 6-.3v5c-2-1-4-1-6.500.3z" fill="#e8602c" />
            <path d="M14.500 9c2 1 4 1 6.500 0l-.6 5c-2 1-4 1-5.900 0z" fill="#8cc43c" />
            <path d="M6.500 15.500c2-1.200 4-1.200 6.500-.2v5.200c-2-1-4-1-6 0z" fill="#4aa6e8" />
            <path d="M14.500 15.500c2 1 4 1 6 0l-.5 5c-2 1-3.500 1-5.500 0z" fill="#f8cc30" />
          </Icon>
        </button>
        {APPS.map(([name, open, art]) => (
          <button
            key={name}
            aria-label={name}
            className={clsx(
              "mr-[2px] flex w-[44px] items-center justify-center rounded-[2px] border",
              open ? "border-[#7f98b5] bg-linear-to-b" : "border-transparent",
              name === "Excel" ? "from-[#eef5fb] to-[#d9e8f4]" : open && "from-[#d3e3f2] to-[#bcd5ec]"
            )}
          >
            <Icon box={28} className="size-[27px]">{art}</Icon>
          </button>
        ))}
      </div>
      <div className="w-[26px] bg-linear-to-r from-[#b2d0ed] to-[#8aa0b8]" />
      <div className="flex items-center gap-[6px] bg-[#8aa0b8] pl-[9px] text-white">
        <span>PT</span>
        <Icon box={12} className="size-[11px]">
          <circle cx="6" cy="6" r="5.500" fill="#1420a8" stroke="#c8d0e8" />
          <path d="M4.300 4.800C4.300 2.700 7.900 2.700 7.800 4.700 7.700 6 6 5.800 6 7.300M6 8.300v1.400" stroke="#fff" strokeWidth="1.400" />
        </Icon>
        <Icon box={14} className="mb-1 size-[13px]">
          <path d="M6 2V1h5v3H9.500M3.500 3.500h5v2.500h-5z" stroke="#fff" />
          <path d="M4 11h5l-2.500 3z" fill="#fff" />
        </Icon>
        <button aria-label="Ícones ocultos"><Caret className="rotate-180 text-white" /></button>
        <Icon box={14} className="ml-[3px] size-[13px]">
          <path d="M3 2v12" stroke="#fff" strokeWidth="1.500" />
          <path d="M4 3h4l1 1h4v5H9L8 8H4z" fill="#fff" stroke="#55657a" strokeWidth=".7" />
        </Icon>
        <Icon box={14} className="size-[13px]">
          <path d="M3 3h6v10H3zM5 1h2v2H5z" stroke="#fff" strokeWidth="1.500" />
          <path d="M8 4h5v4l-1.500 1v4H9V9L8 8z" fill="#fff" stroke="#55657a" strokeWidth=".7" />
        </Icon>
        <time className="mr-2 ml-[17px] text-center text-[8px] leading-[13px]">
          19:42
          <br />
          12/02/2013
        </time>
      </div>
      <button aria-label="Mostrar área de trabalho" className="w-[11px] border-l border-[#5d7088] bg-linear-to-r from-[#b3c4d6] to-[#7f94ac]" />
    </div>
  );
}

export default function App() {
  return (
    <div className="relative flex h-screen flex-col overflow-hidden bg-[#b4cfee] font-['Lato',sans-serif] text-[9px]">
      <TitleBar />
      <OfficeButton />
      <RibbonTabs />
      <Ribbon />
      <FormulaBar />
      <main className="flex min-h-0 flex-1">
        <div className="min-w-0 flex-1 overflow-hidden">
          <Sheet />
        </div>
        <VerticalScroll />
        <div className="w-1 shrink-0 bg-[#a9c3e8]" />
      </main>
      <SheetTabs />
      <StatusBar />
      <Taskbar />
    </div>
  );
}
